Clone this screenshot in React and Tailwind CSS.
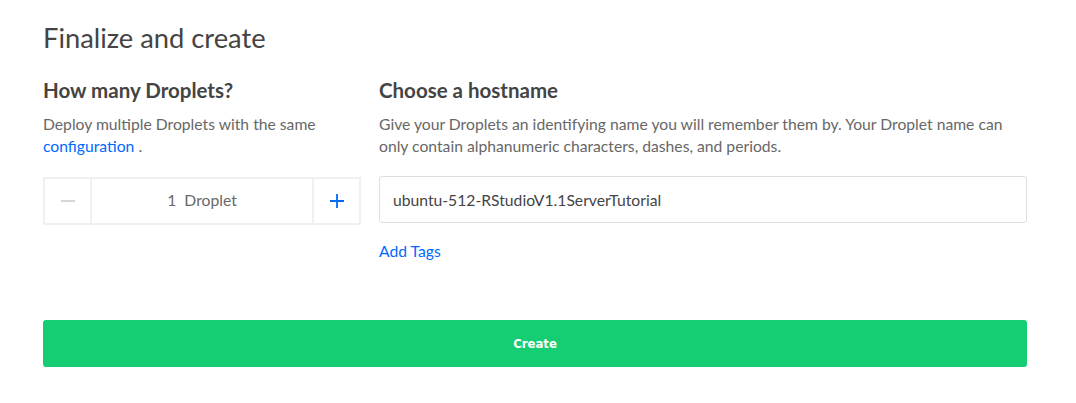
export default function App() {
  return (
    <div className="min-h-screen bg-white pl-[43px] pr-[49px] pt-[21px] text-[#444]" style={{ fontFamily: 'Lato, "Open Sans", sans-serif' }}>
      <h1 className="text-[27.3px] leading-[34px] font-normal text-[#444]">Finalize and create</h1>

      <div className="mt-[23px] flex gap-[18px]">
        {/* Droplet count */}
        <div className="w-[318px] shrink-0">
          <h2 className="text-[20.5px] leading-[24px] font-bold text-[#444]">How many Droplets?</h2>
          <p className="mt-[11px] text-[15.7px] leading-[22px] text-[#676767]">
            Deploy multiple Droplets with the same{' '}
            <a href="#" className="text-[#0069ff]">configuration</a> .
          </p>
          <div className="mt-[20px] flex h-[48px] border-2 border-[#f0f0f0]">
            <button className="flex w-[47px] items-center justify-center border-r-2 border-[#f0f0f0]">
              <span className="block h-[2px] w-[14px] bg-[#d6d6d6]"></span>
            </button>
            <div className="flex flex-1 items-center justify-center text-[15.7px] text-[#676767]">1&nbsp; Droplet</div>
            <button className="flex w-[47px] items-center justify-center border-l-2 border-[#f0f0f0]">
              <svg width="16" height="16" viewBox="0 0 16 16" fill="none" stroke="#0069ff" strokeWidth="1.8">
                <path d="M8 1v14M1 8h14" />
              </svg>
            </button>
          </div>
        </div>

        {/* Hostname */}
        <div className="flex-1">
          <h2 className="text-[20.5px] leading-[24px] font-bold text-[#444]">Choose a hostname</h2>
          <p className="mt-[11px] text-[15.7px] leading-[22px] text-[#676767]">
            Give your Droplets an identifying name you will remember them by. Your Droplet name can only contain alphanumeric characters, dashes, and periods.
          </p>
          <input
            type="text"
            defaultValue="ubuntu-512-RStudioV1.1ServerTutorial"
            className="mt-[19px] h-[47px] w-full rounded-[3px] border border-[#dfdfdf] px-[13px] text-[15.7px] text-[#444] outline-none"
          />
          <a href="#" className="mt-[17px] inline-block text-[15.7px] text-[#0069ff]">Add Tags</a>
        </div>
      </div>

      <button
        className="mt-[56px] flex h-[47px] w-full items-center justify-center rounded-[3px] bg-[#15cd72] pt-[2px] text-[13px] font-bold text-white"
        style={{ fontFamily: '"DejaVu Sans Condensed", "DejaVu Sans", sans-serif' }}
      >
        Create
      </button>
    </div>
  );
}
